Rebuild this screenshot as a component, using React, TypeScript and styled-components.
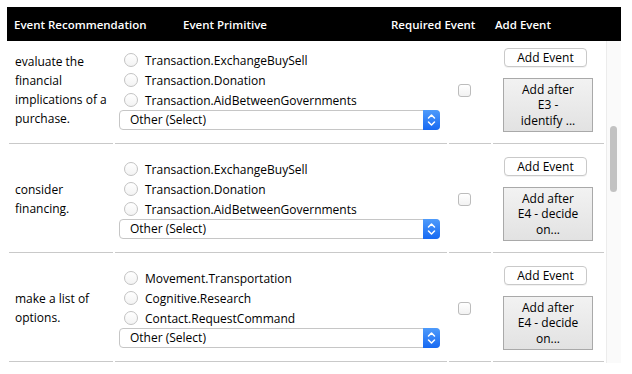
import React, { useLayoutEffect, useRef } from "react";
import styled, { createGlobalStyle } from "styled-components";

const Global = createGlobalStyle`
  html, body { margin: 0; padding: 0; background: #fff; }
  body {
    font-family: "Open Sans", "Liberation Sans", Arial, sans-serif;
    font-size: 12px;
    color: #000;
  }
`;

type Row = {
  text: string;
  options: string[];
  after: string[];
};

const rows: Row[] = [
  {
    text: "evaluate the financial implications of a purchase.",
    options: ["Transaction.ExchangeBuySell", "Transaction.Donation", "Transaction.AidBetweenGovernments"],
    after: ["Add after", "E3 -", "identify ..."],
  },
  {
    text: "consider financing.",
    options: ["Transaction.ExchangeBuySell", "Transaction.Donation", "Transaction.AidBetweenGovernments"],
    after: ["Add after", "E4 - decide", "on..."],
  },
  {
    text: "make a list of options.",
    options: ["Movement.Transportation", "Cognitive.Research", "Contact.RequestCommand"],
    after: ["Add after", "E4 - decide", "on..."],
  },
];

const VIEW_HEIGHT = 322;
const LIST_HEIGHT = 1571;
const LIST_SCROLL = 415;

const Page = styled.div`
  padding: 7px 0 0 7px;
  width: 614px;
`;

const HeaderBar = styled.div`
  display: grid;
  grid-template-columns: 169px 208px 104px 1fr;
  align-items: center;
  height: 34px;
  padding-left: 7px;
  background: #000;
  color: #fff;
  font-size: 11.5px;
  font-weight: 600;
  white-space: nowrap;
`;

const Body = styled.div`
  display: flex;
  height: ${VIEW_HEIGHT}px;
`;

const Viewport = styled.div`
  width: 599px;
  height: 100%;
  overflow: hidden;
`;

const Track = styled.div`
  flex: none;
  width: 15px;
  height: 100%;
  box-sizing: border-box;
  padding: 0 4px 0 3px;
  background: #fafafa;
  border-left: 1px solid #ececec;
`;

const Thumb = styled.div`
  width: 7px;
  border-radius: 4px;
  background: #c2c2c2;
`;

const Table = styled.table`
  width: 599px;
  table-layout: fixed;
  border-collapse: separate;
  border-spacing: 2px;
`;

const Cell = styled.td<{ $pad?: number }>`
  height: 106px;
  padding: 0 0 0 ${(p) => p.$pad ?? 0}px;
  vertical-align: middle;
  border-bottom: 1px solid #c9c9c9;
`;

const RecText = styled.div`
  padding-right: 4px;
  line-height: 19px;
`;

const Option = styled.label`
  display: flex;
  align-items: center;
  gap: 7px;
  height: 20px;
  padding-left: 9px;
  white-space: nowrap;
`;

const Radio = styled.input.attrs({ type: "radio" })`
  appearance: none;
  margin: 0;
  width: 14px;
  height: 14px;
  border-radius: 50%;
  border: 1px solid #c3c3c3;
  background: linear-gradient(#ffffff, #f3f3f3);
  flex: none;
`;

const SelectBox = styled.div`
  display: flex;
  margin-left: 4px;
  width: 321px;
  height: 20px;
  box-sizing: border-box;
  border: 1px solid #c6c6c6;
  border-radius: 4px;
  background: #fff;
`;

const NativeSelect = styled.select`
  appearance: none;
  flex: 1;
  min-width: 0;
  border: none;
  outline: none;
  background: transparent;
  margin: 0;
  padding: 0 0 0 10px;
  font-family: inherit;
  font-size: 12px;
  color: #000;
  line-height: 18px;
`;

const Stepper = styled.span`
  flex: none;
  width: 17px;
  margin: -1px -1px -1px 0;
  border-radius: 0 4px 4px 0;
  background: linear-gradient(#4e9bfb, #1769f2);
  display: flex;
  align-items: center;
  justify-content: center;
`;

const Check = styled.input.attrs({ type: "checkbox" })`
  appearance: none;
  display: block;
  margin: 0;
  width: 13px;
  height: 13px;
  border-radius: 3px;
  border: 1px solid #bcbcbc;
  background: linear-gradient(#ffffff, #f2f2f2);
`;

const AddEventButton = styled.button`
  display: block;
  width: 83px;
  height: 19px;
  margin: 0 0 11px 1px;
  padding: 0;
  border: 1px solid #c9c9c9;
  border-radius: 4px;
  background: #fff;
  box-shadow: 0 1px 0 rgba(0, 0, 0, 0.05);
  font-family: inherit;
  font-size: 12px;
  line-height: 17px;
  color: #000;
`;

const AddAfterButton = styled.button`
  display: block;
  width: 90px;
  height: 54px;
  margin: 0;
  padding: 0;
  border: 1px solid #a9a9a9;
  border-radius: 0;
  background: linear-gradient(#f2f2f2, #e2e2e2);
  font-family: inherit;
  font-size: 12px;
  line-height: 15.5px;
  color: #000;
  text-align: center;
`;

const StepperIcon = () => (
  <svg width="9" height="14" viewBox="0 0 9 14" fill="none">
    <path d="M1.5 5 L4.5 2 L7.5 5" stroke="#fff" strokeWidth="1.5" strokeLinecap="round" strokeLinejoin="round" />
    <path d="M1.5 9 L4.5 12 L7.5 9" stroke="#fff" strokeWidth="1.5" strokeLinecap="round" strokeLinejoin="round" />
  </svg>
);

export default function App() {
  const viewport = useRef<HTMLDivElement>(null);

  useLayoutEffect(() => {
    // the first row in view sits 4px under the header (2px of row spacing above it)
    if (viewport.current) viewport.current.scrollTop = 6;
  }, []);

  const thumbHeight = Math.round((VIEW_HEIGHT * VIEW_HEIGHT) / LIST_HEIGHT);
  const thumbTop = Math.round((LIST_SCROLL / LIST_HEIGHT) * VIEW_HEIGHT);

  return (
    <>
      <Global />
      <Page>
        <HeaderBar>
          <span>Event Recommendation</span>
          <span>Event Primitive</span>
          <span>Required Event</span>
          <span>Add Event</span>
        </HeaderBar>
        <Body>
          <Viewport ref={viewport}>
            <Table>
              <colgroup>
                <col style={{ width: 104 }} />
                <col style={{ width: 332 }} />
                <col style={{ width: 42 }} />
                <col style={{ width: 111 }} />
              </colgroup>
              <tbody>
                {rows.map((r, i) => (
                  <tr key={i}>
                    <Cell $pad={6}>
                      <RecText>{r.text}</RecText>
                    </Cell>
                    <Cell>
                      {r.options.map((o) => (
                        <Option key={o}>
                          <Radio name={`ev-${i}`} />
                          {o}
                        </Option>
                      ))}
                      <SelectBox>
                        <NativeSelect defaultValue="other">
                          <option value="other">Other (Select)</option>
                        </NativeSelect>
                        <Stepper>
                          <StepperIcon />
                        </Stepper>
                      </SelectBox>
                    </Cell>
                    <Cell $pad={9}>
                      <Check />
                    </Cell>
                    <Cell $pad={10}>
                      <AddEventButton>Add Event</AddEventButton>
                      <AddAfterButton>
                        {r.after.map((l, k) => (
                          <React.Fragment key={k}>
                            {k > 0 && <br />}
                            {l}
                          </React.Fragment>
                        ))}
                      </AddAfterButton>
                    </Cell>
                  </tr>
                ))}
              </tbody>
            </Table>
          </Viewport>
          <Track>
            <Thumb style={{ marginTop: thumbTop, height: thumbHeight }} />
          </Track>
        </Body>
      </Page>
    </>
  );
}
